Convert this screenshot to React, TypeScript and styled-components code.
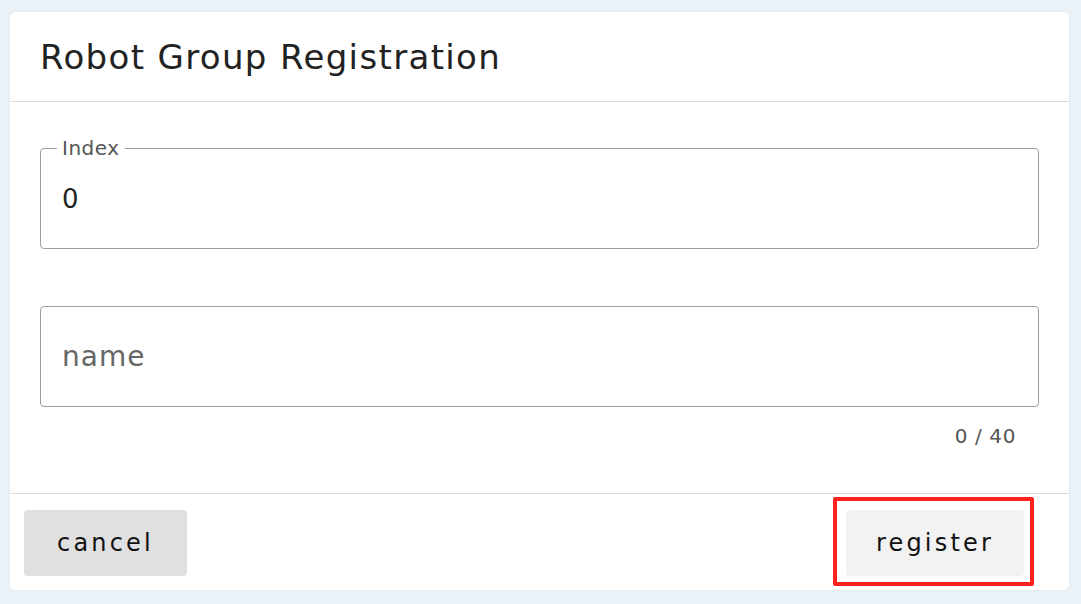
import React from 'react'
import styled, { createGlobalStyle } from 'styled-components'

const GlobalStyle = createGlobalStyle`
  html, body {
    margin: 0;
    padding: 0;
    background: #ebf2f7;
    font-family: "DejaVu Sans", "Open Sans", sans-serif;
  }
`;

export default function App() {
  return (
    <>
      <GlobalStyle />
      <Page>
        <Card>
          <Header>
            <Title>Robot Group Registration</Title>
          </Header>
          <Body>
            <Field>
              <Label>Index</Label>
              <Value>0</Value>
            </Field>
            <Field>
              <Placeholder>name</Placeholder>
            </Field>
            <Counter>0 / 40</Counter>
          </Body>
          <Footer>
            <Button $tone="#e0e0e0">cancel</Button>
            <Highlighted>
              <Button $tone="#f2f2f2" $wide>register</Button>
              <Marker />
            </Highlighted>
          </Footer>
        </Card>
      </Page>
    </>
  )
}

const Page = styled.div`
  padding: 12px 12px 14px 10px;
`;

const Card = styled.div`
  width: 1059px;
  height: 578px;
  background: #fff;
  border-radius: 5px;
  box-shadow: 0 0 2px rgba(0, 0, 0, 0.08);
  display: flex;
  flex-direction: column;
`;

const Header = styled.div`
  height: 89px;
  border-bottom: 1px solid #dcdcdc;
  display: flex;
  align-items: center;
  padding-left: 30px;
`;

const Title = styled.h1`
  margin: 0;
  font-size: 34px;
  font-weight: 400;
  letter-spacing: 1.35px;
  color: #222;
`;

const Body = styled.div`
  height: 391px;
  box-sizing: border-box;
  padding: 46px 30px 0 30px;
  display: flex;
  flex-direction: column;
  gap: 57px;
`;

const Field = styled.div`
  height: 101px;
  box-sizing: border-box;
  border: 1px solid #9e9e9e;
  border-radius: 4px;
  padding: 0 21px;
  display: flex;
  align-items: center;
  position: relative;
`;

const Label = styled.span`
  position: absolute;
  top: -12px;
  left: 16px;
  padding: 0 5px;
  background: #fff;
  font-size: 20px;
  line-height: 22px;
  letter-spacing: 0.5px;
  color: #555;
`;

const Value = styled.span`
  font-size: 26px;
  color: #222;
`;

const Placeholder = styled.span`
  font-size: 28px;
  letter-spacing: 1px;
  color: #666;
`;

const Counter = styled.div`
  align-self: flex-end;
  margin-right: 23px;
  margin-top: -40px;
  font-size: 20px;
  letter-spacing: 0.6px;
  color: #555;
`;

const Footer = styled.div`
  flex: 1;
  border-top: 1px solid #dcdcdc;
  padding: 16px 45px 0 14px;
  display: flex;
  justify-content: space-between;
  align-items: flex-start;
`;

const Button = styled.button<{ $tone: string; $wide?: boolean }>`
  width: ${(p) => (p.$wide ? '178px' : '163px')};
  height: 66px;
  border: none;
  border-radius: 4px;
  background: ${(p) => p.$tone};
  font-family: "DejaVu Sans", "Open Sans", sans-serif;
  font-size: 24px;
  font-weight: 400;
  letter-spacing: 3.2px;
  color: #111;
  padding: 0;
`;

const Highlighted = styled.div`
  position: relative;
  display: flex;
`;

const Marker = styled.div`
  position: absolute;
  top: -13px;
  left: -13px;
  right: -10px;
  bottom: -10px;
  border: 4px solid #ff2020;
  border-radius: 2px;
  pointer-events: none;
`;
